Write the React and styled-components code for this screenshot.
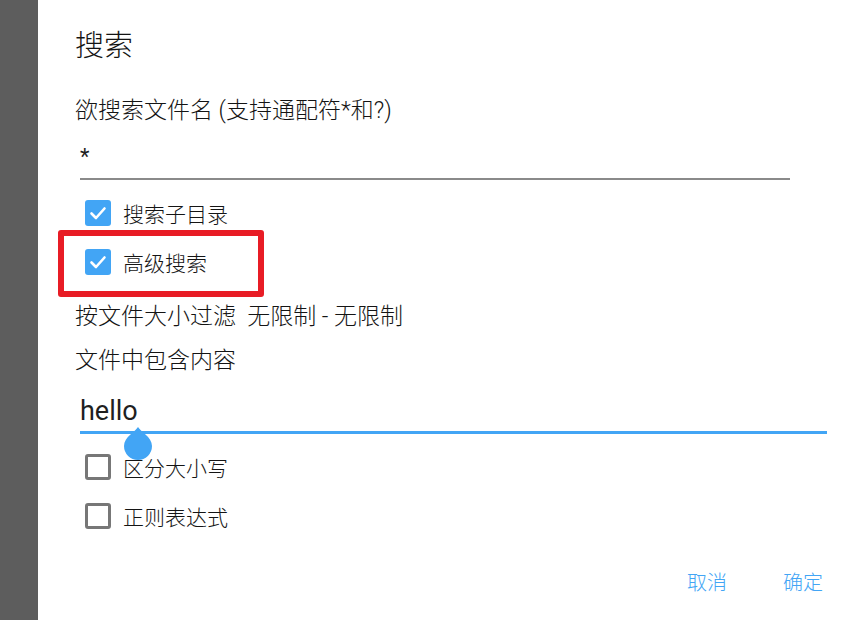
import React from "react";
import styled, { createGlobalStyle } from "styled-components";

const GlobalStyle = createGlobalStyle`
  html, body {
    margin: 0;
    padding: 0;
    background: #fff;
  }
  body {
    font-family: Roboto, "Noto Sans CJK SC", sans-serif;
    color: #141414;
  }
`;

const Screen = styled.div`
  display: flex;
  width: 859px;
  height: 620px;
  overflow: hidden;
`;

const Shade = styled.div`
  width: 38px;
  flex-shrink: 0;
  background: #5d5d5d;
`;

const Dialog = styled.div`
  flex: 1;
  display: flex;
  flex-direction: column;
  padding-left: 37px;
  background: #fff;
`;

const Title = styled.div`
  height: 86px;
  display: flex;
  align-items: center;
  font-size: 29px;
  font-weight: 300;
`;

const Label = styled.div`
  height: 44px;
  display: flex;
  align-items: center;
  font-size: 23px;
  font-weight: 300;
  margin-top: ${(p) => p.$top || 0}px;
  white-space: pre;
`;

const Field = styled.div`
  position: relative;
  margin-left: 5px;
  width: ${(p) => p.$width}px;
  height: ${(p) => p.$height}px;
  display: flex;
  align-items: center;
  box-sizing: border-box;
  padding-top: ${(p) => p.$padTop || 0}px;
  font-size: ${(p) => p.$size}px;
  color: #1f1f1f;
  border-bottom: ${(p) => (p.$focused ? "3px solid #42a5f5" : "2px solid #8a8a8a")};
`;

const Handle = styled.svg`
  position: absolute;
  left: 43px;
  top: 47px;
`;

const CheckRow = styled.div`
  position: relative;
  height: 49px;
  display: flex;
  align-items: center;
  gap: 12px;
  padding-left: 10px;
  font-size: 21px;
  font-weight: 300;
  margin-top: ${(p) => p.$top || 0}px;
`;

const Box = styled.div`
  width: 26px;
  height: 26px;
  box-sizing: border-box;
  border-radius: 3px;
  display: flex;
  align-items: center;
  justify-content: center;
  background: ${(p) => (p.$checked ? "#42a5f5" : "transparent")};
  border: ${(p) => (p.$checked ? "none" : "3px solid #777")};
`;

const Highlight = styled.div`
  position: absolute;
  left: -17px;
  top: -7px;
  width: 206px;
  height: 67px;
  box-sizing: border-box;
  border: 6px solid #e81c25;
  border-radius: 3px;
`;

const Actions = styled.div`
  margin-top: 19px;
  height: 44px;
  display: flex;
  justify-content: flex-end;
  align-items: center;
  gap: 56px;
  padding-right: 36px;
`;

const ActionButton = styled.div`
  font-size: 20px;
  font-weight: 300;
  color: #42a5f5;
`;

function Checkbox({ checked, label, top, highlight }) {
  return (
    <CheckRow $top={top}>
      {highlight && <Highlight />}
      <Box $checked={checked}>
        {checked && (
          <svg width="20" height="20" viewBox="0 0 20 20">
            <path
              d="M3.5 10.5 L8 15 L16.5 5.5"
              fill="none"
              stroke="#fff"
              strokeWidth="2.6"
              strokeLinecap="round"
              strokeLinejoin="round"
            />
          </svg>
        )}
      </Box>
      <span>{label}</span>
    </CheckRow>
  );
}

export default function App() {
  return (
    <>
      <GlobalStyle />
      <Screen>
        <Shade />
        <Dialog>
          <Title>搜索</Title>
          <Label>欲搜索文件名 (支持通配符*和?)</Label>
          <Field $width={710} $height={50} $size={22} $padTop={4}>
            *
          </Field>
          <Checkbox checked label="搜索子目录" top={8} />
          <Checkbox checked label="高级搜索" highlight />
          <Label $top={6}>{"按文件大小过滤  无限制 - 无限制"}</Label>
          <Label>文件中包含内容</Label>
          <Field $width={747} $height={54} $size={27} $padTop={10} $focused>
            hello
            <Handle width="30" height="34" viewBox="0 0 30 34">
              <path
                d="M15 0 C17 4 29 10 29 19 A14 14 0 1 1 1 19 C1 10 13 4 15 0 Z"
                fill="#42a5f5"
              />
            </Handle>
          </Field>
          <Checkbox label="区分大小写" top={8} />
          <Checkbox label="正则表达式" />
          <Actions>
            <ActionButton>取消</ActionButton>
            <ActionButton>确定</ActionButton>
          </Actions>
        </Dialog>
      </Screen>
    </>
  );
}
